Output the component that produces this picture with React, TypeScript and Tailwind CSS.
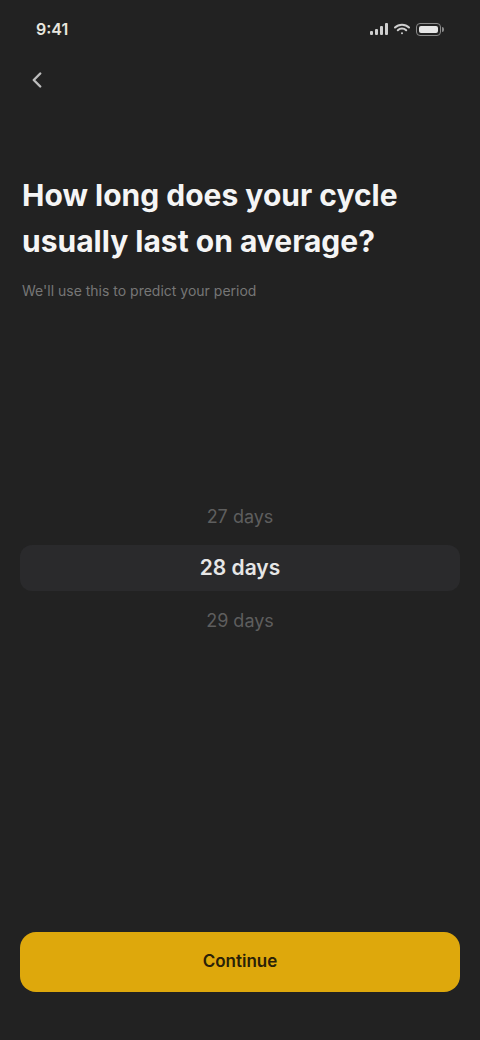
import { ChevronLeft } from 'lucide-react';

const DAYS = [27, 28, 29];

function StatusBar() {
  return (
    <div className="flex h-[54px] items-center justify-between px-[36px] pt-[4px]">
      <span className="text-[16px] font-semibold text-[#e8e6df]">9:41</span>
      <div className="flex items-center gap-[6px]">
        <svg width="18" height="12" viewBox="0 0 18 12" fill="#cfcfcf">
          <rect x="0" y="8" width="3" height="4" rx="1" />
          <rect x="5" y="6" width="3" height="6" rx="1" />
          <rect x="10" y="3" width="3" height="9" rx="1" />
          <rect x="15" y="0" width="3" height="12" rx="1" />
        </svg>
        <svg width="16" height="12" viewBox="0 0 16 12" fill="none" stroke="#cfcfcf" strokeWidth="2" strokeLinecap="round">
          <path d="M1 4.5a10 10 0 0 1 14 0" />
          <path d="M3.8 7.3a6 6 0 0 1 8.4 0" />
          <circle cx="8" cy="10.3" r="1" fill="#cfcfcf" stroke="none" />
        </svg>
        <div className="flex items-center">
          <div className="h-[13px] w-[25px] rounded-[4px] border border-[#8a8a8a] p-[2px]">
            <div className="h-full w-full rounded-[2px] bg-[#e6e6e6]" />
          </div>
          <div className="ml-[1px] h-[5px] w-[2px] rounded-r bg-[#8a8a8a]" />
        </div>
      </div>
    </div>
  );
}

function Picker() {
  return (
    <div className="relative mx-[20px] flex flex-col items-center">
      {/* selection band behind the middle row */}
      <div className="absolute left-0 right-0 top-[56px] h-[46px] rounded-[12px] bg-[#2a2a2c]" />
      {DAYS.map((d, i) => (
        <div
          key={d}
          className={
            i === 1
              ? 'relative flex h-[50px] items-center text-[21px] font-semibold text-[#e6e6e6]'
              : 'relative flex h-[54px] items-center text-[18px] text-[#5e5e5e]'
          }
        >
          {d} days
        </div>
      ))}
    </div>
  );
}

export default function App() {
  return (
    <div
      className="flex h-[1040px] w-[480px] flex-col bg-[#222222]"
      style={{ fontFamily: 'Inter, "Noto Sans", sans-serif' }}
    >
      <StatusBar />

      <div className="px-[24px] pt-[6px]">
        <button type="button" className="flex h-[40px] w-[40px] items-center justify-start text-[#bdbdbd]">
          <ChevronLeft size={26} strokeWidth={2.25} />
        </button>
      </div>

      <div className="px-[22px] pt-[72px]">
        <h1 className="text-[30px] font-bold leading-[46px] text-[#f5f5f5]">
          How long does your cycle usually last on average?
        </h1>
        <p className="mt-[16px] text-[14px] text-[#767676]">We'll use this to predict your period</p>
      </div>

      <div className="mt-[188px]">
        <Picker />
      </div>

      <div className="flex-1" />

      <div className="px-[20px] pb-[48px]">
        <button
          type="button"
          className="h-[60px] w-full rounded-[16px] bg-[#dea80c] text-[17px] font-semibold text-[#2a2108]"
        >
          Continue
        </button>
      </div>
    </div>
  );
}
